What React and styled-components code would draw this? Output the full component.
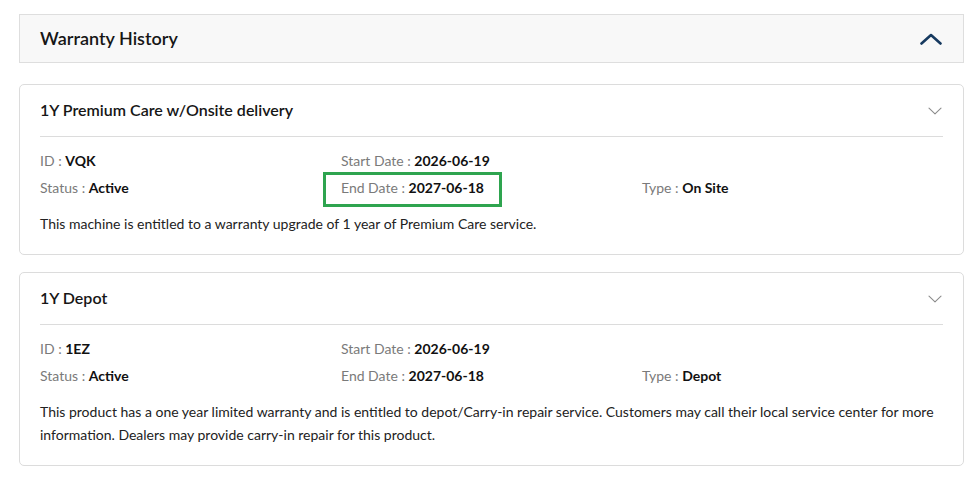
import React from 'react'
import styled, { createGlobalStyle } from 'styled-components'

const GlobalStyle = createGlobalStyle`
  body {
    margin: 0;
    background: #fff;
    font-family: Lato, "Open Sans", Arial, sans-serif;
    color: #222;
  }
`

const warranties = [
  {
    title: '1Y Premium Care w/Onsite delivery',
    id: 'VQK',
    status: 'Active',
    start: '2026-06-19',
    end: '2027-06-18',
    type: 'On Site',
    markEnd: true,
    text: 'This machine is entitled to a warranty upgrade of 1 year of Premium Care service.',
  },
  {
    title: '1Y Depot',
    id: '1EZ',
    status: 'Active',
    start: '2026-06-19',
    end: '2027-06-18',
    type: 'Depot',
    text: 'This product has a one year limited warranty and is entitled to depot/Carry-in repair service. Customers may call their local service center for more information. Dealers may provide carry-in repair for this product.',
  },
]

function ChevronUp() {
  return (
    <svg width="22" height="12" viewBox="0 0 22 12">
      <path d="M1.5 10.5 L11 2 L20.5 10.5" fill="none" stroke="#173a60" strokeWidth="2.6" strokeLinecap="round" strokeLinejoin="round" />
    </svg>
  )
}

function ChevronDown() {
  return (
    <svg width="14" height="8" viewBox="0 0 14 8">
      <path d="M1 1.2 L7 6.8 L13 1.2" fill="none" stroke="#8c8c8c" strokeWidth="1.1" strokeLinecap="round" strokeLinejoin="round" />
    </svg>
  )
}

function Field({ label, value, marked }) {
  return (
    <Cell>
      <FieldText $marked={marked}>
        <Label>{label} : </Label>
        <Value>{value}</Value>
      </FieldText>
    </Cell>
  )
}

function WarrantyCard({ item }) {
  return (
    <Card>
      <CardHead>
        <CardTitle>{item.title}</CardTitle>
        <ChevronDown />
      </CardHead>
      <Details>
        <Field label="ID" value={item.id} />
        <Field label="Start Date" value={item.start} />
        <Cell />
        <Field label="Status" value={item.status} />
        <Field label="End Date" value={item.end} marked={item.markEnd} />
        <Field label="Type" value={item.type} />
      </Details>
      <Description>{item.text}</Description>
    </Card>
  )
}

export default function App() {
  return (
    <>
      <GlobalStyle />
      <Page>
        <Section>
          <SectionTitle>Warranty History</SectionTitle>
          <ChevronUp />
        </Section>
        <List>
          {warranties.map((w) => (
            <WarrantyCard key={w.id} item={w} />
          ))}
        </List>
      </Page>
    </>
  )
}

const Page = styled.div`
  width: 945px;
  padding: 14px 15px 20px 19px;
`

const Section = styled.div`
  display: flex;
  align-items: center;
  justify-content: space-between;
  height: 47px;
  padding: 0 21px 0 20px;
  background: #f8f8f8;
  border: 1px solid #dedede;
`

const SectionTitle = styled.h2`
  margin: 0 0 2px;
  font-size: 18px;
  font-weight: 600;
  color: #161616;
`

const List = styled.div`
  display: flex;
  flex-direction: column;
  gap: 17px;
  margin-top: 21px;
`

const Card = styled.div`
  border: 1px solid #dcdcdc;
  border-radius: 5px;
  padding: 0 20px 19px;
  background: #fff;
`

const CardHead = styled.div`
  display: flex;
  align-items: center;
  justify-content: space-between;
  height: 51px;
  padding-right: 1px;
  border-bottom: 1px solid #dcdcdc;
`

const CardTitle = styled.h3`
  margin: 0 0 3px;
  font-size: 16px;
  font-weight: 600;
  color: #161616;
`

const Details = styled.div`
  display: grid;
  grid-template-columns: repeat(3, 1fr);
  padding-top: 10px;
  font-size: 14px;
  line-height: 27px;
`

const Cell = styled.div`
  min-height: 27px;
`

const FieldText = styled.span`
  position: relative;
  display: inline-block;

  ${(p) =>
    p.$marked &&
    `
    &::after {
      content: '';
      position: absolute;
      left: -18px;
      right: -18px;
      top: -2px;
      bottom: -6px;
      border: 3px solid #2ea44f;
    }
  `}
`

const Label = styled.span`
  color: #7a7a7a;
`

const Value = styled.span`
  color: #111;
  font-weight: 700;
`

const Description = styled.p`
  margin: 11px 0 0;
  font-size: 14px;
  line-height: 23px;
  color: #222;
`
